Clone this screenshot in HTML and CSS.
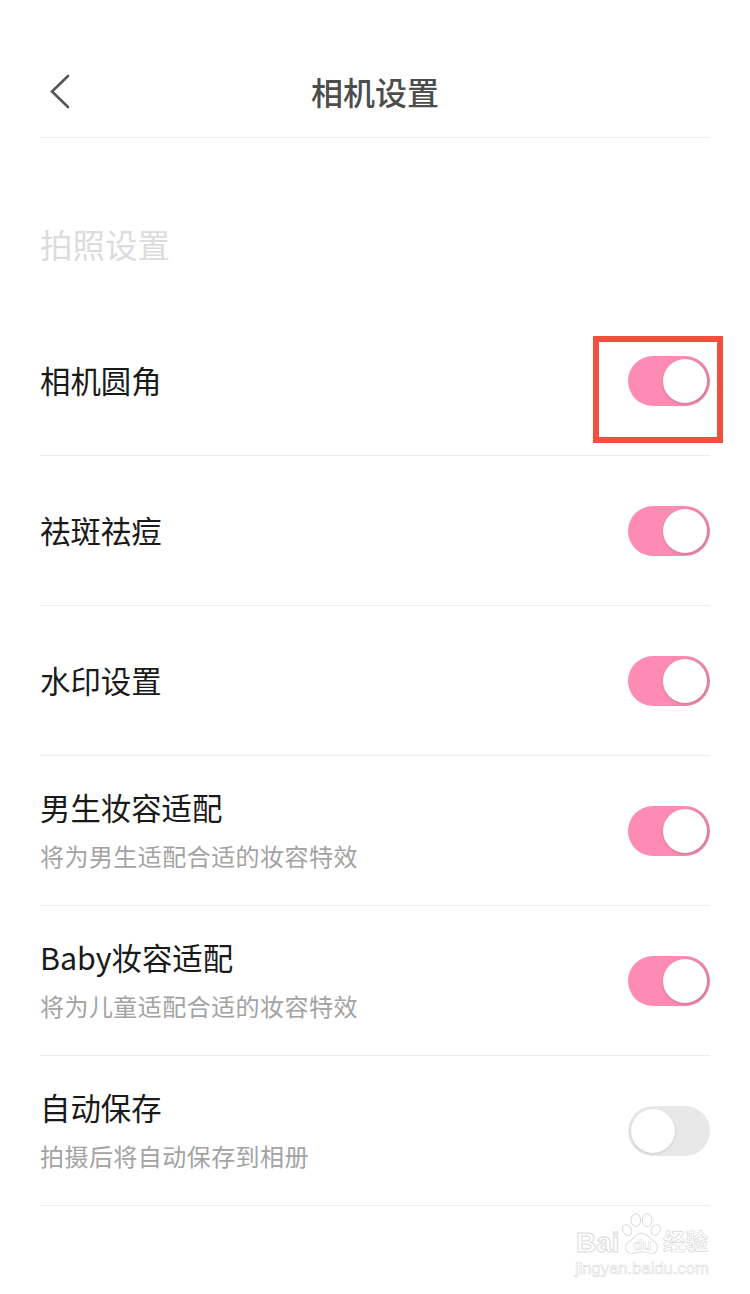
FILE: index.html
```html
<!DOCTYPE html>
<html lang="zh-CN">
<head>
<meta charset="utf-8">
<title>相机设置</title>
<link rel="stylesheet" href="styles.css">
</head>
<body>
<main class="page">
  <header class="header">
    <svg class="back" width="24" height="36" viewBox="0 0 24 36"><path d="M19 2 L3 17.5 L19 33" fill="none" stroke="#555" stroke-width="2.6" stroke-linecap="round" stroke-linejoin="miter"/></svg>
    <h1 class="title">相机设置</h1>
  </header>
  <h2 class="section">拍照设置</h2>
  <ul class="list">
    <li class="row">
      <div class="label"><span class="name">相机圆角</span></div>
      <span class="toggle on"><span class="knob"></span></span>
      <span class="highlight"></span>
    </li>
    <li class="row">
      <div class="label"><span class="name">祛斑祛痘</span></div>
      <span class="toggle on"><span class="knob"></span></span>
    </li>
    <li class="row">
      <div class="label"><span class="name">水印设置</span></div>
      <span class="toggle on"><span class="knob"></span></span>
    </li>
    <li class="row">
      <div class="label"><span class="name">男生妆容适配</span><span class="sub">将为男生适配合适的妆容特效</span></div>
      <span class="toggle on"><span class="knob"></span></span>
    </li>
    <li class="row">
      <div class="label"><span class="name">Baby妆容适配</span><span class="sub">将为儿童适配合适的妆容特效</span></div>
      <span class="toggle on"><span class="knob"></span></span>
    </li>
    <li class="row">
      <div class="label"><span class="name">自动保存</span><span class="sub">拍摄后将自动保存到相册</span></div>
      <span class="toggle off"><span class="knob"></span></span>
    </li>
  </ul>
  <div class="mark">
    <div class="mark-top">
      <span class="mark-bai">Bai</span>
      <svg class="paw" width="40" height="42" viewBox="0 0 46 52" preserveAspectRatio="none" fill="#fff" stroke="#dcdcdc" stroke-width="1.2">
        <ellipse cx="7" cy="21" rx="5" ry="7" transform="rotate(-25 7 21)"/>
        <ellipse cx="17" cy="9" rx="5.5" ry="8"/>
        <ellipse cx="30" cy="9" rx="5.5" ry="8"/>
        <ellipse cx="40" cy="21" rx="5" ry="7" transform="rotate(25 40 21)"/>
        <path d="M23 25 C16 25 15 32 10 35 C3 39 4 50 13 50 C18 50 20 48 24 48 C29 48 31 50 35 50 C43 50 44 40 38 35 C32 31 31 25 23 25 Z"/>
      </svg>
      <span class="mark-du">du</span>
      <span class="mark-jy">经验</span>
    </div>
    <div class="mark-url">jingyan.baidu.com</div>
  </div>
</main>
</body>
</html>
```
FILE: styles.css
```css
* { box-sizing: border-box; }
html, body { margin: 0; padding: 0; background: #fff; }
body {
  width: 750px;
  height: 1294px;
  overflow: hidden;
  font-family: "Noto Sans CJK SC", "Noto Sans", sans-serif;
}
.page { position: relative; height: 1294px; padding: 0 40px; }
.header {
  position: relative;
  height: 138px;
  padding-top: 46px;
  border-bottom: 1px solid #eee;
  text-align: center;
}
.back { position: absolute; left: 9px; top: 74px; }
.title {
  margin: 0;
  font-size: 32px;
  line-height: 90px;
  font-weight: 500;
  color: #4d4d4d;
}
.section {
  margin: 0;
  padding-top: 82px;
  height: 168px;
  font-size: 32.5px;
  line-height: 48px;
  font-weight: 400;
  color: #dcdcdc;
}
.list { margin: 0; padding: 0; list-style: none; }
.row {
  position: relative;
  display: flex;
  align-items: center;
  justify-content: space-between;
  height: 150px;
  border-bottom: 1px solid #eee;
}
.label { display: flex; flex-direction: column; gap: 13px; padding-bottom: 2px; }
.name { font-size: 30.4px; line-height: 40px; color: #1a1a1a; }
.sub { font-size: 24px; letter-spacing: 0.45px; line-height: 32px; color: #a3a3a3; }
.toggle {
  display: flex;
  width: 82px;
  height: 50px;
  border-radius: 25px;
  padding: 3px;
}
.toggle.on { justify-content: flex-end; background: linear-gradient(100deg, #fd8bb3 55%, #e283a8 100%); }
.toggle.off { justify-content: flex-start; background: #e8e8e8; }
.knob {
  width: 44px;
  height: 44px;
  border-radius: 50%;
  background: #fff;
  box-shadow: 0 1px 3px rgba(0, 0, 0, 0.14);
}
.highlight {
  position: absolute;
  right: -13px;
  top: 30px;
  width: 130px;
  height: 107px;
  border: 6px solid #f2503f;
}
.mark {
  position: absolute;
  left: 575px;
  top: 1213px;
  width: 140px;
  color: #fff;
}
.mark-top { position: relative; height: 46px; }
.mark-bai, .mark-du, .mark-jy {
  position: absolute;
  -webkit-text-stroke: 1px #dadada;
  color: #fff;
  font-family: "Liberation Sans", sans-serif;
  font-weight: 700;
}
.mark-bai { left: 1px; top: 11px; font-size: 28px; line-height: 38px; }
.paw { position: absolute; left: 46px; top: 0; }
.mark-du { left: 58px; top: 22px; font-size: 15px; line-height: 20px; -webkit-text-stroke-width: 0.6px; }
.mark-jy {
  left: 88px;
  top: 10px;
  font-family: "Noto Sans CJK SC", sans-serif;
  font-size: 22.5px;
  line-height: 34px;
  -webkit-text-stroke-width: 0.7px;
}
.mark-url {
  font-family: "Liberation Sans", sans-serif;
  font-size: 16.6px;
  line-height: 20px;
  white-space: nowrap;
  color: #fff;
  -webkit-text-stroke: 0.6px #dcdcdc;
}
```
